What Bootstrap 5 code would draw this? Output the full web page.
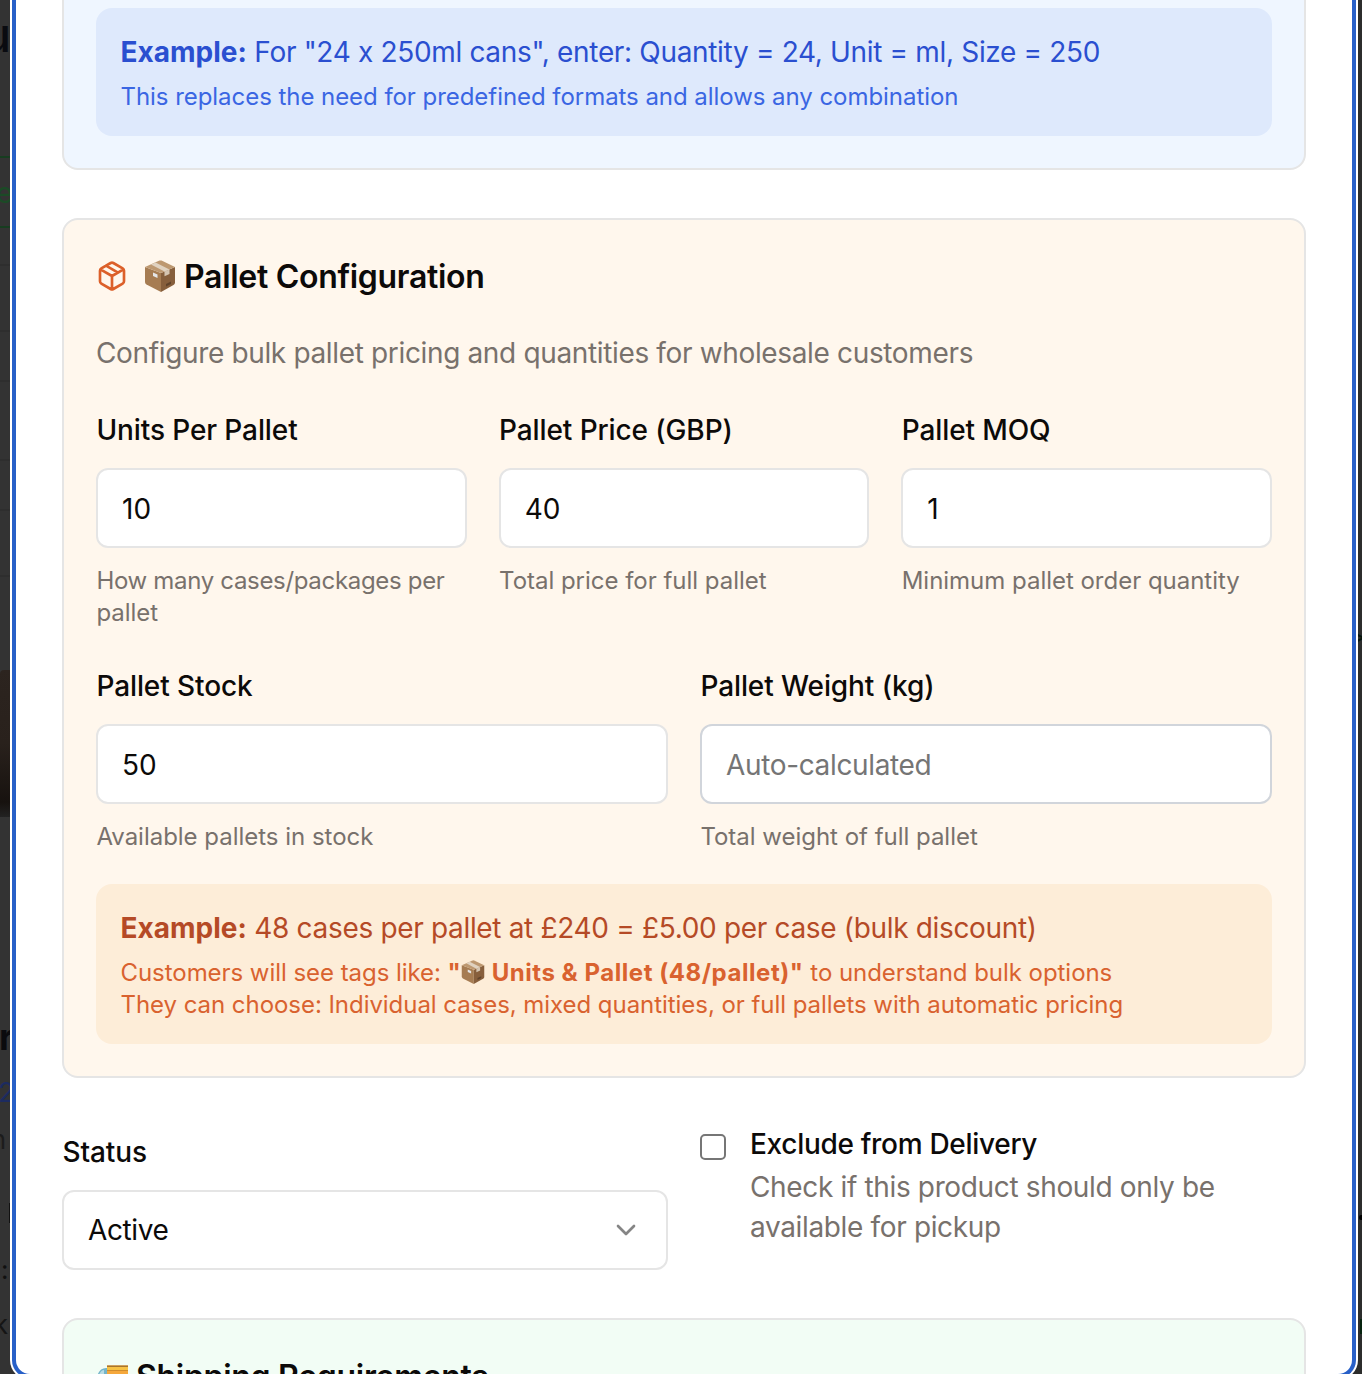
<!DOCTYPE html>
<html lang="en">
<head>
<meta charset="utf-8">
<meta name="viewport" content="width=device-width, initial-scale=1">
<title>Edit product</title>
<link href="https://cdn.jsdelivr.net/npm/bootstrap@5.3.0/dist/css/bootstrap.min.css" rel="stylesheet">
<style>
body{margin:0;height:1374px;overflow:hidden;background:#333;font-family:Inter,"Liberation Sans",sans-serif;font-size:28px;line-height:40px;color:#0c0a09}
.page-shade{inset:0;background:linear-gradient(90deg,#333 50%,#2c2d2c 50%)}
.page-bit{position:absolute;line-height:1;white-space:nowrap}
.page-line{position:absolute;left:0;width:10px;height:2px}
.photo-edge{position:absolute;left:0;top:670px;width:10px;height:147px;background:linear-gradient(#2c241f,#29211c 50%,#17120f 90%,#222);border-top-left-radius:4px}
.sheet{margin:-30px 4px 0 10px;height:1410px;border:2px solid #fff;border-top:0;border-radius:0 0 20px 20px;background:#fff}
.sheet-ring{height:100%;border:4px solid #2860c8;border-top:0;border-radius:0 0 18px 18px;padding:0 46px;overflow:hidden}
.panel{border:2px solid #e5e5e5;border-radius:16px;padding:32px}
.panel-blue{background:#eff6ff;height:200px;display:flex;flex-direction:column;justify-content:flex-end}
.panel-orange{background:#fff7ed;margin-top:48px;height:860px}
.panel-green{background:#f2fdf5;margin-top:48px;height:200px}
.note{border-radius:16px;padding:24px 24px 24px 24.5px}
.note-blue{background:#dee9fc;color:#2a4fd0}
.note-blue .sub{color:#3a66e3}
.note-orange{background:#fdedd8;color:#b54a26;margin-top:31px}
.note-orange .sub{color:#d9622f}
.sub{font-size:24px;line-height:32px;margin-top:8.500px;margin-bottom:-.5px;letter-spacing:-.05px}
.sub b{letter-spacing:.54px}
.body-text{letter-spacing:-.35px}
.note .body-text{letter-spacing:-.33px}
.note .body-text b{letter-spacing:0}
.heading{font-size:32px;line-height:46px;padding-top:2px;font-weight:600;letter-spacing:-.3px;margin:0}
.intro{margin:32.500px 0 43.500px}
.muted-text{color:#78716c}
.cols{--bs-gutter-x:32px;--bs-gutter-y:0}
.field-label{display:block;font-weight:500;line-height:28px;margin-bottom:24px;padding-left:.4px;letter-spacing:-.1px}
.form-control.field{height:80px;border:2px solid #e5e5e5;border-radius:12px;padding:2px 24px 0;font-size:28px;line-height:40px;color:#0c0a09;background:#fff}
.form-control.field-auto{border-color:#d1d5db;letter-spacing:-.35px}
.form-control.field::placeholder{color:#757575;opacity:1}
.help{font-size:24px;line-height:32px;margin-top:17px;color:#78716c;letter-spacing:-.02px;padding-left:.4px;white-space:nowrap}
.help-tight{letter-spacing:-.32px}
.second-row{margin-top:43px}
.status-row{margin-top:46px}
.status-col{padding-top:14px}
.picker{height:80px;border:2px solid #e5e5e5;border-radius:12px;padding:0 24px;background:#fff;letter-spacing:-.4px}
.form-check-input.tick{width:26px;height:26px;border:2px solid #767676;border-radius:5px;margin:10px 24px 0 0;float:none;flex:none}
.tick-label{font-weight:500;letter-spacing:-.3px}
.tick-note{margin-top:2.500px}
.inline-parcel{vertical-align:-3px}
</style>
<script src="https://cdn.jsdelivr.net/npm/bootstrap@5.3.0/dist/js/bootstrap.bundle.min.js"></script>
</head>
<body>
<svg width="0" height="0" class="position-absolute" aria-hidden="true">
  <symbol id="parcel" viewBox="0 0 32 32">
    <path d="M1 7 17 13V32L2.500 24.500Q1 23.500 1 22Z" fill="#a67c52"/>
    <path d="M17 13 31 7V22.500Q31 24 29.500 25L17 32Z" fill="#875f3c"/>
    <path d="M1 7 15.500.6Q16.500.2 17.500.6L31 7 17 13Z" fill="#bd9870"/>
    <path d="M7 4.400 11.500 2.400 25.500 9.400 20.500 11.500Z" fill="#e0d2c0"/>
    <path d="M20.500 11.500 25.500 9.400V14L20.500 16.300Z" fill="#d5c5b1"/>
    <path d="M9 12.500 13.500 14.500V18L9 16Z" fill="#e5e6e8"/>
    <path d="M22 24 27 21.500V24L22 26.500Z" fill="#60432b"/>
  </symbol>
</svg>

<div class="page-shade position-absolute overflow-hidden" aria-hidden="true">
  <span class="page-bit" style="right:1351px;top:11px;font-size:48px;font-weight:500;color:#0a0b10">u</span>
  <i class="page-line" style="top:156px;background:#173d20"></i>
  <span class="page-bit" style="right:1349px;top:178px;font-size:29px;color:#1b4a26">re</span>
  <i class="page-line" style="top:226px;background:#173d20"></i>
  <i class="page-line" style="top:264px;background:#2e2e2e"></i>
  <i class="page-line" style="top:330px;background:#2e2e2e"></i>
  <i class="page-line" style="top:380px;background:#2e2e2e"></i>
  <i class="page-line" style="top:459px;background:#2e2e2e"></i>
  <i class="page-line" style="top:509px;background:#2e2e2e"></i>
  <i class="page-line" style="top:575px;background:#2e2e2e"></i>
  <i class="photo-edge"></i>
  <span class="page-bit" style="left:-1px;top:1019px;font-size:36px;font-weight:700;color:#0b0b0e">r</span>
  <span class="page-bit" style="left:-2px;top:1079px;font-size:27px;color:#1c2b60">2</span>
  <span class="page-bit" style="right:1356px;top:1127px;font-size:26px;color:#1c1c1c">n</span>
  <i class="page-bit" style="left:9px;top:1203px;width:2px;height:20px;background:#111"></i>
  <span class="page-bit" style="left:1px;top:1257px;font-size:26px;color:#111">:</span>
  <span class="page-bit" style="right:1354px;top:1312px;font-size:26px;color:#151515">k</span>
  <span class="page-bit" style="left:1349px;top:624px;font-size:26px;color:#06150b">&gt;</span>
  <i class="page-bit" style="left:1359px;top:1215px;width:5px;height:5px;border-radius:2px;background:#000"></i>
  <i class="page-bit" style="left:1360px;top:1319px;width:2px;height:15px;background:#06240f"></i>
</div>

<main class="sheet position-relative">
 <div class="sheet-ring">
  <section class="panel panel-blue">
    <div class="note note-blue">
      <div class="body-text"><b>Example:</b> For "24 x 250ml cans", enter: Quantity = 24, Unit = ml, Size = 250</div>
      <div class="sub">This replaces the need for predefined formats and allows any combination</div>
    </div>
  </section>

  <section class="panel panel-orange">
    <div class="d-flex align-items-center">
      <svg width="32" height="32" viewBox="0 0 24 24" fill="none" stroke="#dc602a" stroke-width="2" stroke-linecap="round" stroke-linejoin="round" class="me-3"><path d="m7.500 4.270 9 5.150M21 8a2 2 0 0 0-1-1.730l-7-4a2 2 0 0 0-2 0l-7 4A2 2 0 0 0 3 8v8a2 2 0 0 0 1 1.730l7 4a2 2 0 0 0 2 0l7-4A2 2 0 0 0 21 16ZM3.300 7l8.700 5 8.700-5M12 22V12"/></svg>
      <svg width="32" height="32" class="me-2"><use href="#parcel"/></svg>
      <h2 class="heading">Pallet Configuration</h2>
    </div>
    <p class="intro muted-text body-text">Configure bulk pallet pricing and quantities for wholesale customers</p>
    <div class="row cols">
      <div class="col-4">
        <label class="field-label" for="units">Units Per Pallet</label>
        <input class="form-control field" id="units" value="10">
        <div class="help"><span class="help-tight">How many cases/packages per</span><br>pallet</div>
      </div>
      <div class="col-4">
        <label class="field-label" for="price">Pallet Price (GBP)</label>
        <input class="form-control field" id="price" value="40">
        <div class="help">Total price for full pallet</div>
      </div>
      <div class="col-4">
        <label class="field-label" for="moq">Pallet MOQ</label>
        <input class="form-control field" id="moq" value="1">
        <div class="help">Minimum pallet order quantity</div>
      </div>
    </div>
    <div class="row cols second-row">
      <div class="col-6">
        <label class="field-label" for="stock">Pallet Stock</label>
        <input class="form-control field" id="stock" value="50">
        <div class="help">Available pallets in stock</div>
      </div>
      <div class="col-6">
        <label class="field-label" for="weight">Pallet Weight (kg)</label>
        <input class="form-control field field-auto" id="weight" placeholder="Auto-calculated">
        <div class="help">Total weight of full pallet</div>
      </div>
    </div>
    <div class="note note-orange">
      <div class="body-text"><b>Example:</b> 48 cases per pallet at £240 = £5.00 per case (bulk discount)</div>
      <div class="sub">Customers will see tags like: <b>"<svg width="24" height="24" class="inline-parcel"><use href="#parcel"/></svg> Units &amp; Pallet (48/pallet)"</b> to understand bulk options<br>They can choose: Individual cases, mixed quantities, or full pallets with automatic pricing</div>
    </div>
  </section>

  <div class="row cols status-row">
    <div class="col-6 status-col">
      <label class="field-label">Status</label>
      <div class="picker d-flex align-items-center justify-content-between">
        <span>Active</span>
        <svg width="32" height="32" viewBox="0 0 24 24" fill="none" stroke="#858585" stroke-width="2" stroke-linecap="round" stroke-linejoin="round"><path d="m6 9 6 6 6-6"/></svg>
      </div>
    </div>
    <div class="col-6 d-flex">
      <input type="checkbox" class="form-check-input tick" id="exclude">
      <div>
        <label for="exclude" class="tick-label d-block">Exclude from Delivery</label>
        <div class="tick-note muted-text body-text">Check if this product should only be<br>available for pickup</div>
      </div>
    </div>
  </div>

  <section class="panel panel-green">
    <div class="d-flex align-items-center">
      <svg width="32" height="32" viewBox="0 0 32 32" class="me-2"><path d="M11 5.500H32V25H11Z" fill="#f5a83c"/><path d="M11 5.500H32V7H11Z" fill="#a8752c"/><path d="M11 7H32V10H11Z" fill="#f7c244"/><path d="M11 10H32V11H11Z" fill="#d08c2c"/><path d="M1 17Q3 8 10 8H11V25H1Z" fill="#75b5c9"/><path d="M3 15Q5 10 8 10V16Z" fill="#b9dce5"/><circle cx="8" cy="26" r="4" fill="#444"/><circle cx="25" cy="26" r="4" fill="#444"/></svg>
      <h2 class="heading">Shipping Requirements</h2>
    </div>
  </section>
 </div>
</main>
</body>
</html>
